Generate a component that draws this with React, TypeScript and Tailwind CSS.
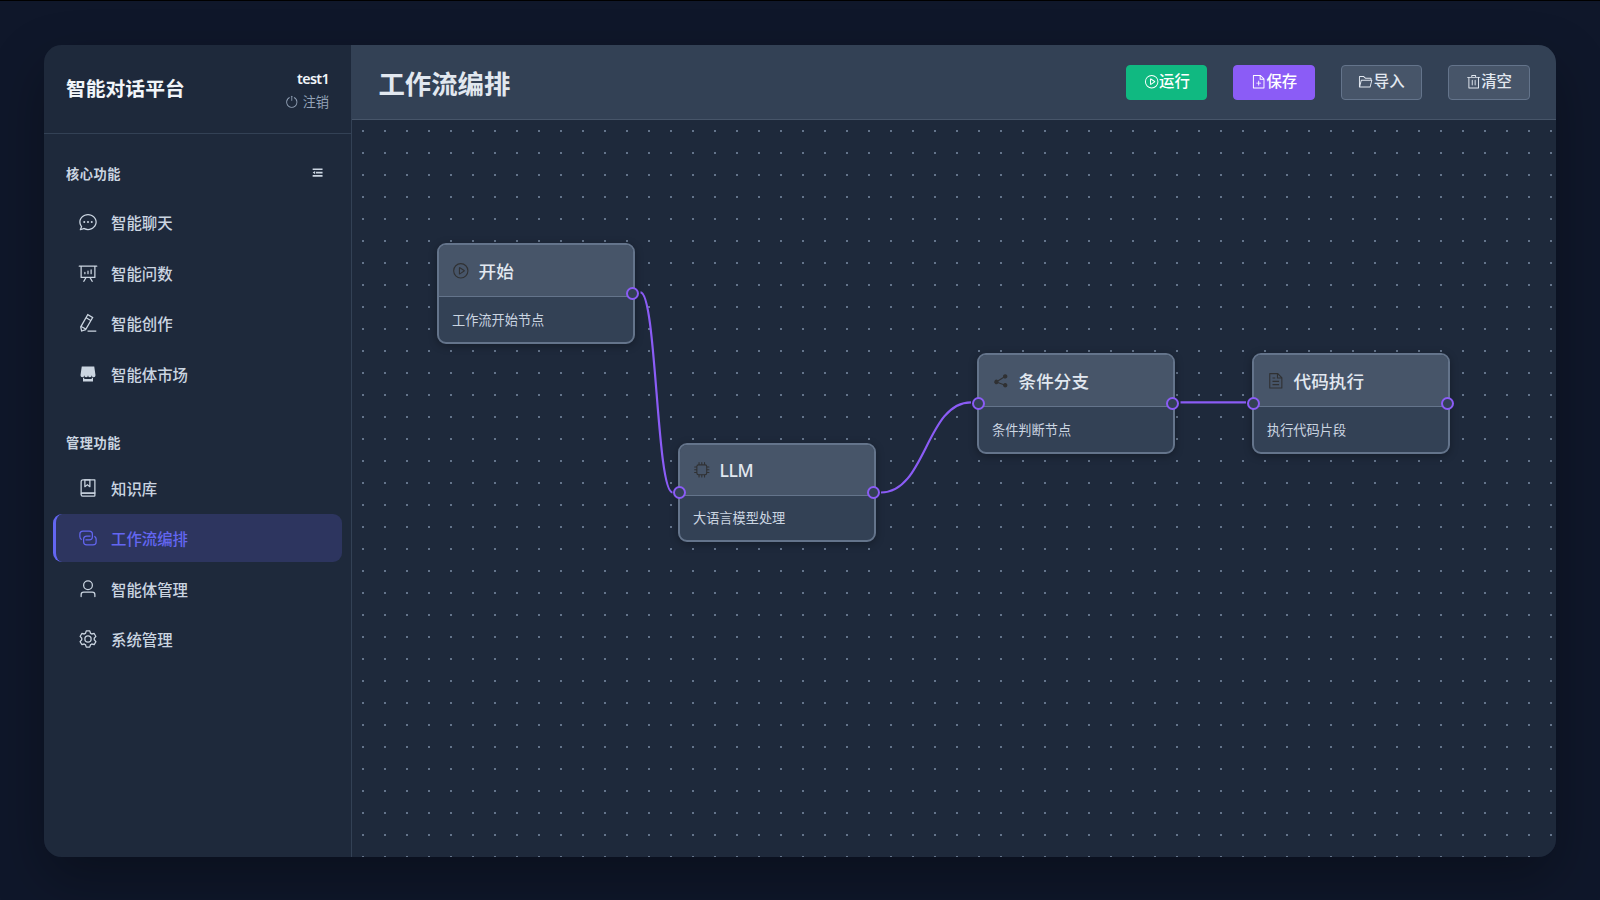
import React from "react";

const ICONS = {
  chat: [
    "m174.72 855.68 135.296-45.12 23.68 11.84C388.096 849.536 448.576 864 512 864c211.84 0 384-166.784 384-352S723.84 160 512 160 128 326.784 128 512c0 69.12 24.96 139.264 70.848 199.232l22.08 28.8-46.272 115.584zm-45.248 82.56A32 32 0 0 1 89.6 896l58.368-145.92C94.72 680.32 64 596.864 64 512 64 299.904 256 96 512 96s448 203.904 448 416-192 416-448 416a461.056 461.056 0 0 1-206.912-48.384l-175.616 58.56z",
    "M512 563.2a51.2 51.2 0 1 1 0-102.4 51.2 51.2 0 0 1 0 102.4m192 0a51.2 51.2 0 1 1 0-102.4 51.2 51.2 0 0 1 0 102.4m-384 0a51.2 51.2 0 1 1 0-102.4 51.2 51.2 0 0 1 0 102.4",
  ],
  analysis: [
    "m665.216 768 110.848 192h-73.856L591.36 768H433.024L322.176 960H248.32l110.848-192H160a32 32 0 0 1-32-32V192H64a32 32 0 0 1 0-64h896a32 32 0 1 1 0 64h-64v544a32 32 0 0 1-32 32zM832 192H192v512h640zM352 448a32 32 0 0 1 32 32v64a32 32 0 0 1-64 0v-64a32 32 0 0 1 32-32m160-64a32 32 0 0 1 32 32v128a32 32 0 0 1-64 0V416a32 32 0 0 1 32-32m160-64a32 32 0 0 1 32 32v192a32 32 0 1 1-64 0V352a32 32 0 0 1 32-32",
  ],
  pen: [
    "m199.04 672.64 193.984 112 224-387.968-193.92-112-224 388.032zm-23.872 60.16 32.896 148.288 144.896-45.696zM455.04 229.248l193.92 112 56.704-98.112-193.984-112-56.64 98.112zM104.32 708.8l384-665.024 304.768 175.936L409.152 884.8h.064l-248.448 78.336zm384 254.272v-64h448v64z",
  ],
  shop: [
    "M704 704h64v192H256V704h64v64h384zm188.544-152.192C894.528 559.616 896 567.616 896 576a96 96 0 1 1-192 0 96 96 0 1 1-192 0 96 96 0 1 1-192 0 96 96 0 1 1-192 0c0-8.384 1.408-16.384 3.392-24.192L192 128h640z",
  ],
  collection: [
    "M192 736h640V128H256a64 64 0 0 0-64 64zm64-672h608a32 32 0 0 1 32 32v672a32 32 0 0 1-32 32H160l-32 57.536V192A128 128 0 0 1 256 64",
    "M240 800a48 48 0 1 0 0 96h592v-96zm0-64h656v160a64 64 0 0 1-64 64H240a112 112 0 0 1 0-224m144-608v250.88l96-76.8 96 76.8V128zm-64-64h320v381.44a32 32 0 0 1-51.968 24.96L480 384l-108.032 86.4A32 32 0 0 1 320 445.44z",
  ],
  connection: [
    "M640 384v64H448a128 128 0 0 0-128 128v128a128 128 0 0 0 128 128h320a128 128 0 0 0 128-128V576a128 128 0 0 0-64-110.848V394.88c74.56 26.368 128 97.472 128 181.056v128a192 192 0 0 1-192 192H448a192 192 0 0 1-192-192V576a192 192 0 0 1 192-192z",
    "M384 640v-64h192a128 128 0 0 0 128-128V320a128 128 0 0 0-128-128H256a128 128 0 0 0-128 128v128a128 128 0 0 0 64 110.848v70.272A192.064 192.064 0 0 1 64 448V320a192 192 0 0 1 192-192h320a192 192 0 0 1 192 192v128a192 192 0 0 1-192 192z",
  ],
  user: [
    "M512 512a192 192 0 1 0 0-384 192 192 0 0 0 0 384m0 64a256 256 0 1 1 0-512 256 256 0 0 1 0 512m320 320v-96a96 96 0 0 0-96-96H288a96 96 0 0 0-96 96v96a32 32 0 1 1-64 0v-96a160 160 0 0 1 160-160h448a160 160 0 0 1 160 160v96a32 32 0 1 1-64 0",
  ],
  setting: [
    "M600.704 64a32 32 0 0 1 30.464 22.208l35.2 109.376c14.784 7.232 28.928 15.36 42.432 24.512l112.384-24.192a32 32 0 0 1 34.432 15.36L944.32 364.8a32 32 0 0 1-4.032 37.504l-77.12 85.12a357.12 357.12 0 0 1 0 49.024l77.12 85.248a32 32 0 0 1 4.032 37.504l-88.704 153.6a32 32 0 0 1-34.432 15.296L708.8 803.904c-13.44 9.088-27.648 17.28-42.368 24.512l-35.264 109.376A32 32 0 0 1 600.704 960H423.296a32 32 0 0 1-30.464-22.208L357.696 828.48a351.616 351.616 0 0 1-42.56-24.64l-112.32 24.256a32 32 0 0 1-34.432-15.36L79.68 659.2a32 32 0 0 1 4.032-37.504l77.12-85.248a357.12 357.12 0 0 1 0-48.896l-77.12-85.248A32 32 0 0 1 79.68 364.8l88.704-153.6a32 32 0 0 1 34.432-15.296l112.32 24.256c13.568-9.152 27.776-17.408 42.56-24.64l35.2-109.312A32 32 0 0 1 423.232 64H600.64zm-23.424 64H446.72l-36.352 113.088-24.512 11.968a294.113 294.113 0 0 0-34.816 20.096l-22.656 15.36-116.224-25.088-65.28 113.152 79.68 88.192-1.92 27.136a293.12 293.12 0 0 0 0 40.192l1.92 27.136-79.808 88.192 65.344 113.152 116.224-25.024 22.656 15.296a294.113 294.113 0 0 0 34.816 20.096l24.512 11.968L446.72 896h130.688l36.48-113.152 24.448-11.904a288.282 288.282 0 0 0 34.752-20.096l22.592-15.296 116.288 25.024 65.28-113.152-79.744-88.192 1.92-27.136a293.12 293.12 0 0 0 0-40.256l-1.92-27.136 79.808-88.128-65.344-113.152-116.288 24.96-22.592-15.232a287.616 287.616 0 0 0-34.752-20.096l-24.448-11.904L577.344 128zM512 320a192 192 0 1 1 0 384 192 192 0 0 1 0-384m0 64a128 128 0 1 0 0 256 128 128 0 0 0 0-256",
  ],
  play: [
    "M512 64a448 448 0 1 1 0 896 448 448 0 0 1 0-896m0 832a384 384 0 0 0 0-768 384 384 0 0 0 0 768m-48-247.616L668.608 512 464 375.616zm10.624-342.656 249.472 166.336a48 48 0 0 1 0 79.872L474.624 718.272A48 48 0 0 1 400 678.336V345.6a48 48 0 0 1 74.624-39.936z",
  ],
  documentAdd: [
    "M832 384H576V128H192v768h640zm-26.496-64L640 154.496V320zM160 64h480l256 256v608a32 32 0 0 1-32 32H160a32 32 0 0 1-32-32V96a32 32 0 0 1 32-32m320 512V448h64v128h128v64H544v128h-64V640H352v-64z",
  ],
  folder: [
    "M878.08 448H241.92l-96 384h636.16l96-384zM832 384v-64H485.76L357.504 192H128v448l57.92-231.744A32 32 0 0 1 216.96 384zm-24.96 512H96a32 32 0 0 1-32-32V160a32 32 0 0 1 32-32h287.872l128.384 128H864a32 32 0 0 1 32 32v96h23.04a32 32 0 0 1 31.04 39.744l-112 448A32 32 0 0 1 807.04 896",
  ],
  trash: [
    "M160 256H96a32 32 0 0 1 0-64h256V95.936a32 32 0 0 1 32-32h256a32 32 0 0 1 32 32V192h256a32 32 0 1 1 0 64h-64v672a32 32 0 0 1-32 32H192a32 32 0 0 1-32-32zm448-64v-64H416v64zM224 896h576V256H224zm192-128a32 32 0 0 1-32-32V416a32 32 0 0 1 64 0v320a32 32 0 0 1-32 32m192 0a32 32 0 0 1-32-32V416a32 32 0 0 1 64 0v320a32 32 0 0 1-32 32",
  ],
  cpu: [
    "M320 256a64 64 0 0 0-64 64v384a64 64 0 0 0 64 64h384a64 64 0 0 0 64-64V320a64 64 0 0 0-64-64zm0-64h384a128 128 0 0 1 128 128v384a128 128 0 0 1-128 128H320a128 128 0 0 1-128-128V320a128 128 0 0 1 128-128",
    "M512 64a32 32 0 0 1 32 32v128h-64V96a32 32 0 0 1 32-32m160 0a32 32 0 0 1 32 32v128h-64V96a32 32 0 0 1 32-32m-320 0a32 32 0 0 1 32 32v128h-64V96a32 32 0 0 1 32-32m160 896a32 32 0 0 1-32-32V800h64v128a32 32 0 0 1-32 32m160 0a32 32 0 0 1-32-32V800h64v128a32 32 0 0 1-32 32m-320 0a32 32 0 0 1-32-32V800h64v128a32 32 0 0 1-32 32M64 512a32 32 0 0 1 32-32h128v64H96a32 32 0 0 1-32-32m0-160a32 32 0 0 1 32-32h128v64H96a32 32 0 0 1-32-32m0 320a32 32 0 0 1 32-32h128v64H96a32 32 0 0 1-32-32m896-160a32 32 0 0 1-32 32H800v-64h128a32 32 0 0 1 32 32m0-160a32 32 0 0 1-32 32H800v-64h128a32 32 0 0 1 32 32m0 320a32 32 0 0 1-32 32H800v-64h128a32 32 0 0 1 32 32",
  ],
  share: [
    "m679.872 348.8-301.76 188.608a127.808 127.808 0 0 1 5.12 52.16l279.936 104.96a128 128 0 1 1-22.464 59.904l-279.872-104.96a128 128 0 1 1-16.64-166.272l301.696-188.608a128 128 0 1 1 33.92 54.272z",
  ],
  document: [
    "M832 384H576V128H192v768h640zm-26.496-64L640 154.496V320zM160 64h480l256 256v608a32 32 0 0 1-32 32H160a32 32 0 0 1-32-32V96a32 32 0 0 1 32-32m160 448h384v64H320zm0-192h160v64H320zm0 384h384v64H320z",
  ],
  power: [
    "M352 159.872V230.4a352 352 0 1 0 320 0v-70.528A416.128 416.128 0 0 1 512 960a416 416 0 0 1-160-800.128z",
    "M512 64q32 0 32 32v320q0 32-32 32t-32-32V96q0-32 32-32",
  ],
  fold: ["M896 192H128v128h768zm0 256H384v128h512zm0 256H128v128h768zM320 384 128 512l192 128z"],
};

type IconName = keyof typeof ICONS;

function Icon({ name, className }: { name: IconName; className: string }) {
  return (
    <svg viewBox="0 0 1024 1024" fill="currentColor" className={`shrink-0 ${className}`}>
      {ICONS[name].map((d) => (
        <path key={d} d={d} />
      ))}
    </svg>
  );
}

function MenuItem({ icon, label, active = false }: { icon: IconName; label: string; active?: boolean }) {
  return (
    <li
      className={`flex h-12 items-center rounded-[9px] border-l-[3px] pt-1 pl-[22px] ${
        active ? "border-[#6366f1] bg-[#2d355f] text-[#6366f1]" : "border-transparent text-[#cbd5e1]"
      }`}
    >
      <Icon name={icon} className="-mt-1 mr-[13px] size-5" />
      <span className="text-[15.4px] font-medium">{label}</span>
    </li>
  );
}

function Sidebar() {
  return (
    <aside className="flex w-[308px] shrink-0 flex-col border-r border-[#334155] bg-[#1e293b]">
      <div className="flex h-[89px] shrink-0 items-center justify-between border-b border-[#334155] px-[22px]">
        <h1 className="text-[19.8px] font-bold text-[#f1f5f9]">智能对话平台</h1>
        <div className="flex flex-col items-end pt-[3px]">
          <span className="text-[14.3px] leading-[22px] font-semibold tracking-[-0.045em] text-[#f1f5f9]">test1</span>
          <span className="mt-px flex items-center gap-1 text-[13.2px] leading-[22px] text-[#94a3b8]">
            <Icon name="power" className="size-[13.6px]" />
            注销
          </span>
        </div>
      </div>
      <div className="flex h-[80px] shrink-0 items-center justify-between pr-[27px] pl-[22px]">
        <h2 className="pt-0.5 text-[13.2px] font-bold tracking-[0.55px] text-[#cbd5e1]">核心功能</h2>
        <Icon name="fold" className="-mt-0.5 size-[13.2px] text-[#cbd5e1]" />
      </div>
      <ul className="-mt-[16px] flex flex-col gap-[2.5px] px-[9px]">
        <MenuItem icon="chat" label="智能聊天" />
        <MenuItem icon="analysis" label="智能问数" />
        <MenuItem icon="pen" label="智能创作" />
        <MenuItem icon="shop" label="智能体市场" />
      </ul>
      <h2 className="mt-[35px] mb-[11px] pl-[22px] text-[13.2px] leading-5 font-bold tracking-[0.55px] text-[#cbd5e1]">管理功能</h2>
      <ul className="flex flex-col gap-[2.5px] px-[9px]">
        <MenuItem icon="collection" label="知识库" />
        <MenuItem icon="connection" label="工作流编排" active />
        <MenuItem icon="user" label="智能体管理" />
        <MenuItem icon="setting" label="系统管理" />
      </ul>
    </aside>
  );
}

function ToolButton({ icon, label, className }: { icon: IconName; label: string; className: string }) {
  return (
    <button className={`flex h-[35px] w-[81.4px] items-center justify-center rounded-[4px] border text-[15.4px] font-medium ${className}`}>
      <Icon name={icon} className="size-[15.4px]" />
      {label}
    </button>
  );
}

interface FlowNode {
  icon: IconName;
  title: string;
  text: string;
  position: string;
  input: boolean;
  head: string;
}

const NODES: FlowNode[] = [
  { icon: "play", title: "开始", text: "工作流开始节点", position: "left-[85px] top-[123px] h-[101px]", input: false, head: "h-[52px]" },
  { icon: "cpu", title: "LLM", text: "大语言模型处理", position: "left-[326px] top-[323px] h-[99px]", input: true, head: "h-[51px] tracking-[-0.03em]" },
  { icon: "share", title: "条件分支", text: "条件判断节点", position: "left-[625px] top-[233px] h-[101px]", input: true, head: "h-[52px]" },
  { icon: "document", title: "代码执行", text: "执行代码片段", position: "left-[900px] top-[233px] h-[101px]", input: true, head: "h-[52px]" },
];

const HANDLE = "absolute top-1/2 -mt-[6.5px] size-[13px] rounded-full border-2 border-[#8b5cf6] bg-[#334155]";

function NodeCard({ node }: { node: FlowNode }) {
  return (
    <div className={`absolute flex w-[198px] flex-col rounded-[9px] border-2 border-[#64748b] bg-[#334155] shadow-[0_2px_9px_rgba(0,0,0,0.3)] ${node.position}`}>
      <div className={`flex shrink-0 items-center rounded-t-[7px] border-b border-[#64748b] bg-[#475569] px-[13px] ${node.head}`}>
        <Icon name={node.icon} className="mr-[9px] size-[17.6px] text-[#303133]" />
        <span className="pt-px text-[17.6px] font-medium text-[#e2e8f0]">{node.title}</span>
      </div>
      <div className="flex flex-1 items-center px-[13px] pt-0.5 text-[13.2px] text-[#cbd5e1]">{node.text}</div>
      {node.input && <span className={`${HANDLE} -left-[7px]`} />}
      <span className={`${HANDLE} -right-[6px]`} />
    </div>
  );
}

function Canvas() {
  return (
    <div className="relative flex-1 bg-[#1e293b] bg-[conic-gradient(from_270deg_at_2px_2px,#64748b_90deg,transparent_0)] bg-[length:22px_22px] bg-[position:10px_10px]">
      <svg className="absolute inset-0 size-full" fill="none" stroke="#8b5cf6" strokeWidth="2.2">
        <path d="M288.5 172.3C304.5 172.3 304.5 372.5 320.5 372.5" />
        <path d="M529 372.5C574 372.5 574 282.3 619 282.3" />
        <path d="M828.5 282.3H894" />
      </svg>
      {NODES.map((node) => (
        <NodeCard key={node.title} node={node} />
      ))}
    </div>
  );
}

export default function App() {
  return (
    <div className="h-[900px] w-[1600px] overflow-hidden border-t border-black bg-[#0f172a] px-11 pt-11 font-['Noto_Sans','Noto_Sans_CJK_SC',sans-serif]">
      <div className="flex h-[812px] overflow-hidden rounded-[17.6px] shadow-[0_22px_55px_rgba(0,0,0,0.3)]">
        <Sidebar />
        <main className="flex min-w-0 flex-1 flex-col">
          <header className="flex h-[75px] shrink-0 items-center justify-between border-b border-[#475569] bg-[#334155] pr-[26.4px] pl-[26.4px]">
            <h1 className="pt-[5px] text-[26.4px] font-bold text-[#e2e8f0]">工作流编排</h1>
            <div className="flex gap-[26px]">
              <ToolButton icon="play" label="运行" className="border-[#10b981] bg-[#10b981] text-white" />
              <ToolButton icon="documentAdd" label="保存" className="border-[#8b5cf6] bg-[#8b5cf6] text-white" />
              <ToolButton icon="folder" label="导入" className="border-[#64748b] bg-[#475569] text-[#e2e8f0]" />
              <ToolButton icon="trash" label="清空" className="border-[#64748b] bg-[#475569] text-[#e2e8f0]" />
            </div>
          </header>
          <Canvas />
        </main>
      </div>
    </div>
  );
}
